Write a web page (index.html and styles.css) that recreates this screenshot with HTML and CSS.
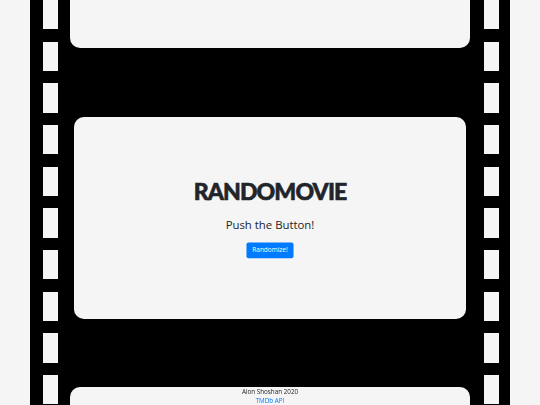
FILE: index.html
```html
<!DOCTYPE html>
<html lang="en">
<head>
<meta charset="utf-8">
<title>Randomovie</title>
<link rel="stylesheet" href="styles.css">
</head>
<body>
  <main class="strip">
    <section class="frame"></section>
    <section class="frame frame-active">
      <h1 class="title">RANDOMOVIE</h1>
      <p class="tagline">Push the Button!</p>
      <button class="btn" type="button">Randomize!</button>
    </section>
    <section class="frame"></section>
  </main>
  <footer class="footer">
    <div>Alon Shoshan 2020</div>
    <a class="footer-link" href="#">TMDb API</a>
  </footer>
</body>
</html>
```

FILE: styles.css
```css
html, body {
  margin: 0;
  padding: 0;
}

body {
  background: #f5f5f5;
  height: 405px;
  overflow: hidden;
  font-family: "Noto Sans", "Open Sans", sans-serif;
  color: #212529;
}

/* film strip with sprocket holes on both edges */
.strip {
  width: 480px;
  height: 405px;
  margin: 0 auto;
  padding: 0 40px;
  box-sizing: border-box;
  overflow: hidden;
  display: flex;
  flex-direction: column;
  gap: 66.5px;
  background:
    repeating-linear-gradient(#f5f5f5 0 29.4px, transparent 29.4px 41.67px) 13px 0.33px / 15px 100% no-repeat,
    repeating-linear-gradient(#f5f5f5 0 29.4px, transparent 29.4px 41.67px) 454px 0.33px / 15px 100% no-repeat,
    #000;
}

.frame {
  flex: none;
  height: 206px;
  background: #f5f5f5;
  border-radius: 10px;
}

.frame:first-child {
  margin-top: -158px;
}

.frame-active {
  transform: scale(0.98);
  display: flex;
  flex-direction: column;
  align-items: center;
  justify-content: center;
  padding-bottom: 1px;
  box-sizing: border-box;
}

.title {
  margin: 0;
  font-family: "Lato", "Open Sans", sans-serif;
  font-weight: 900;
  font-size: 23.5px;
  line-height: 28px;
  letter-spacing: -0.9px;
  -webkit-text-stroke: 0.6px #212529;
  color: #212529;
}

.tagline {
  margin: 12px 0 0;
  font-family: "Open Sans", "Noto Sans", sans-serif;
  font-size: 11.6px;
  line-height: 16px;
  color: #212529;
}

.btn {
  margin-top: 10px;
  width: 48px;
  height: 16px;
  padding: 0;
  border: none;
  border-radius: 2px;
  background: #007bff;
  color: #fff;
  font-family: "Open Sans", sans-serif;
  font-size: 6.6px;
  line-height: 16px;
}

.footer {
  position: fixed;
  left: 0;
  right: 0;
  bottom: 0;
  text-align: center;
  font-family: "Open Sans", sans-serif;
  font-size: 6.3px;
  line-height: 9px;
  color: #212529;
}

.footer-link {
  color: #007bff;
  text-decoration: none;
}
```
